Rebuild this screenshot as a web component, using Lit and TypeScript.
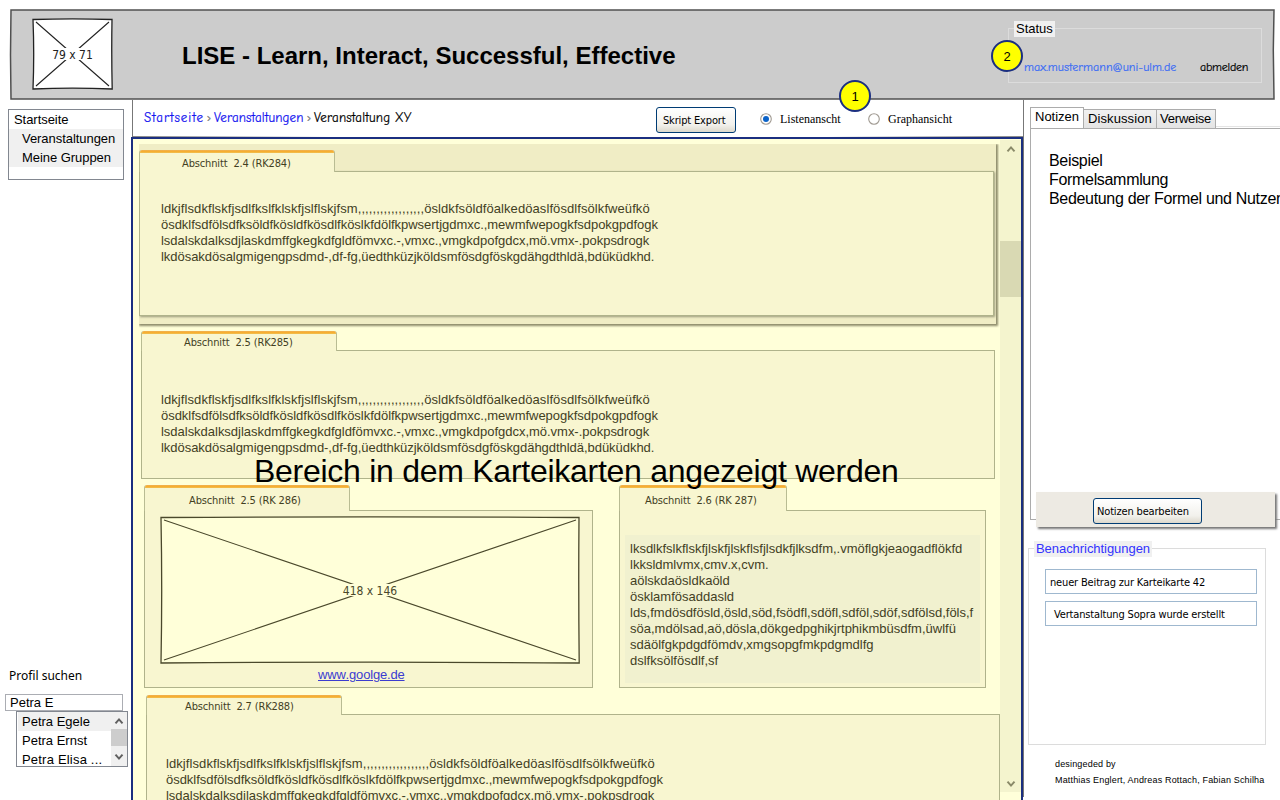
import { LitElement, html, css, svg } from "lit";
import { customElement, property } from "lit/decorators.js";

const FILLER: [string, number][] = [
  ["ldkjflsdkflskfjsdlfkslfklskfjslflskjfsm,,,,,,,,,,,,,,,,,,ösldkfsöldföalkedöaslfösdlfsölkfweüfkö", 0.08],
  ["ösdklfsdfölsdfksöldfkösldfkösdlfköslkfdölfkpwsertjgdmxc.,mewmfwepogkfsdpokgpdfogk", -0.03],
  ["lsdalskdalksdjlaskdmffgkegkdfgldfömvxc.-,vmxc.,vmgkdpofgdcx,mö.vmx-.pokpsdrogk", -0.02],
  ["lkdösakdösalgmigengpsdmd-,df-fg,üedthküzjköldsmfösdgföskgdähgdthldä,bdüküdkhd.", -0.04],
];

const NOTE_TEXT = [
  "lksdlkfslkflskfjlskfjlskflsfjlsdkfjlksdfm,.vmöflgkjeaogadflökfd",
  "lkksldmlvmx,cmv.x,cvm.",
  "aölskdaösldkaöld",
  "ösklamfösaddasld",
  "lds,fmdösdfösld,ösld,söd,fsödfl,sdöfl,sdföl,sdöf,sdfölsd,föls,f",
  "söa,mdölsad,aö,dösla,dökgedpghikjrtphikmbüsdfm,üwlfü",
  "sdäölfgkpdgdfömdv,xmgsopgfmkpdgmdlfg",
  "dslfksölfösdlf,sf",
];

const filler = () =>
  FILLER.map(([line, gap]) => html`<div style="letter-spacing:${gap}px">${line}</div>`);

const chevron = (up: boolean) => html`<svg width="10" height="8" viewBox="0 0 10 8">
  ${svg`<path d=${up ? "M1.5 6.3 L5 2.4 L8.5 6.3" : "M1.5 1.7 L5 5.6 L8.5 1.7"} fill="none" stroke="currentColor" stroke-width="2"/>`}
</svg>`;

@customElement("image-placeholder")
export class ImagePlaceholder extends LitElement {
  static styles = css`
    :host { display: block; }
    svg { display: block; font: 12px "DejaVu Sans Condensed", "DejaVu Sans", sans-serif; font-stretch: condensed; }
  `;
  @property({ type: Number }) width = 100;
  @property({ type: Number }) height = 100;
  @property() label = "";
  @property() fill = "#fff";
  @property() stroke = "#333";
  @property({ type: Number }) gap = 42;

  render() {
    const { width: w, height: h, gap: g } = this;
    return html`<svg width=${w} height=${h} viewBox="0 0 ${w} ${h}">
      <path d="M1 1.5 Q${w / 2} 0.2 ${w - 1} 1.5 Q${w - 1.6} ${h / 2} ${w - 0.8} ${h - 1} Q${w / 2} ${h - 2.6} 1 ${h - 1} Q2.4 ${h / 2} 1 1.5 Z"
        fill=${this.fill} stroke=${this.stroke} stroke-width="1.3"/>
      <path d="M4 4 L${w - 4} ${h - 4} M${w - 4} 4 L4 ${h - 4}" stroke=${this.stroke} stroke-width="1.1"/>
      <rect x=${(w - g) / 2} y=${h / 2 - 6} width=${g} height="12" fill=${this.fill}/>
      <text x=${w / 2} y=${h / 2 + 5} text-anchor="middle" fill=${this.stroke}>${this.label}</text>
    </svg>`;
  }
}

@customElement("index-card")
export class IndexCard extends LitElement {
  static styles = css`
    :host { display: flex; flex-direction: column; box-sizing: border-box; color: #42401f; }
    .tab {
      box-sizing: border-box; width: var(--tab-w); height: var(--tab-h); margin-bottom: -1px;
      background: #f8f6d0; border: 1px solid #b9bc93; border-width: 0 1px; border-radius: 3px 3px 0 0;
      position: relative; overflow: hidden; flex: none;
      padding: var(--tab-pad);
      font: 11px/14px "DejaVu Sans Condensed", "DejaVu Sans", sans-serif; font-stretch: condensed;
      letter-spacing: -0.14px; white-space: pre;
    }
    .tab::before { content: ""; position: absolute; inset: 0 -1px auto; height: 3px; background: linear-gradient(#eeb055, #f8ae2a 60%, #eec25c); }
    .body {
      box-sizing: border-box; flex: 1; background: #f8f6d0; border: 1px solid #b0b38b; padding: var(--body-pad);
      font: 13px/16px "Liberation Sans", Arial, sans-serif; white-space: nowrap; font-kerning: none;
    }
    :host([raised]) .body { box-shadow: 1px 1px 2px #9c9c7c; }
  `;
  @property() label = "";
  render() {
    return html`<div class="tab">${this.label}</div><div class="body"><slot></slot></div>`;
  }
}

@customElement("app-root")
export class AppRoot extends LitElement {
  static styles = css`
    :host { display: block; }
    * { box-sizing: border-box; }
    .page {
      width: 1280px; height: 800px; overflow: hidden; background: #fff; color: #000; position: relative;
      display: flex; flex-direction: column; font: 13px/19px "Liberation Sans", Arial, sans-serif; white-space: nowrap;
    }
    .ui { font-family: "DejaVu Sans Condensed", "DejaVu Sans", sans-serif; font-stretch: condensed; font-size: 11px; letter-spacing: -0.16px; }
    .hand { font-family: "Comic Sans MS", "Comic Neue", "Noto Sans", sans-serif; font-size: 13px; -webkit-text-stroke: .2px; }
    .legend { background: #f0f0f0; width: max-content; line-height: 16px; height: 16px; padding: 0 2px; }

    header { height: 100px; flex: none; display: flex; align-items: flex-start; position: relative; padding-left: 32px; }
    .plate { position: absolute; left: 0; top: 0; }
    header > * { position: relative; }
    header > .plate { position: absolute; }
    header image-placeholder { margin-top: 18px; }
    h1 { font-size: 24px; line-height: 28px; margin: 42px 0 0 69px; width: 826px; }
    .status { width: 254px; height: 55px; margin-top: 28px; border: 1px solid #dcdcdc; }
    .status .legend { margin: -8px 0 0 5px; }
    .account { display: flex; padding: 21px 0 0 15px; line-height: 18px; }
    .account .hand { font-size: 12px; }
    .mail { color: #3b6cf4; letter-spacing: .05px; width: 176px; }
    .logout { letter-spacing: -0.25px; }

    main { flex: 1; display: flex; min-height: 0; }
    .side { width: 131px; flex: none; display: flex; flex-direction: column; padding-top: 9px; }
    .tree { margin-left: 8px; width: 116px; height: 71px; border: 1px solid #828790; letter-spacing: -.05px; }
    .tree div { padding-left: 5px; }
    .tree .sub { background: #f0f0f0; padding-left: 13px; }
    .search-label { font: 12px/16px "Noto Sans", sans-serif; margin: 488px 0 10px 9px; }
    .search { margin-left: 5px; width: 118px; height: 17px; border: 1px solid #abadb3; padding-left: 4px; line-height: 15px; }
    .results { margin-left: 16px; width: 112px; height: 56px; border: 1px solid #828790; display: flex; overflow: hidden; }
    .names { flex: 1; padding-left: 1px; }
    .names div { padding-left: 4px; height: 19px; }
    .names div:last-child { letter-spacing: .2px; }
    .names .on { background: #f0f0f0; }
    .mini { width: 16px; background: #f0f0f0; display: flex; flex-direction: column; align-items: center; color: #606060; justify-content: space-between; padding: 5px 0; position: relative; }
    .mini::before { content: ""; position: absolute; top: 17px; width: 100%; height: 17px; background: #cdcdcd; }
    .mini svg { display: block; }

    .center { width: 892px; flex: none; display: flex; flex-direction: column; }
    .tools { height: 37px; flex: none; margin-left: 1px; border: 1px solid #777; border-width: 0 0 0 1.5px; padding: 7px 0 0 11px; display: flex; align-items: flex-start; background: linear-gradient(90deg, #888, #fff 22%, #fff 78%, #888) bottom / 100% 1px no-repeat; }
    .crumbs { display: flex; width: 512px; line-height: 22px; }
    .crumbs i { font-style: normal; color: #777; width: 10px; text-align: center; }
    .crumbs a { color: #1414f0; }
    .start { width: 60px; letter-spacing: .9px; }
    .lectures { width: 90px; letter-spacing: .1px; }
    .lecture { letter-spacing: .15px; }
    .btn { border: 1.5px solid #003c74; border-radius: 3px; background: linear-gradient(#fff, #f2f1ec 70%, #dcd8cc); height: 26px; line-height: 25px; }
    .export { width: 80px; padding-left: 6px; }
    .radio { display: flex; align-items: center; gap: 8px; font: 12px/16px "Liberation Serif", "Times New Roman", serif; margin-top: 4px; }
    .radio svg { display: block; }
    .r1 { margin-left: 24px; width: 108px; }
    .deck { flex: 1; height: 663px; border: 2px solid #1b2f80; border-bottom: 0; background: #ffffd9; display: flex; width: 892px; }
    .cards { width: 867px; height: 661px; overflow: hidden; padding: 5px 0 0 6px; }
    .group { width: 857px; height: 180px; background: #f0edc5; padding: 6px 0 0; box-shadow: 1px 1px 2px 1px #8f8d6c; clip-path: inset(0 -5px -5px 0); }
    .c1 { width: 855px; height: 166px; --tab-w: 196px; --tab-h: 22px; --tab-pad: 7px 0 0 42px; --body-pad: 29px 0 0 21px; }
    .c2 { margin: 7px 0 0 2px; width: 854px; height: 148px; --tab-w: 196px; --tab-h: 20px; --tab-pad: 5px 0 0 42px; --body-pad: 41px 0 0 19px; }
    .pair { display: flex; gap: 26px; margin: 6px 0 0 5px; }
    .c3 { width: 449px; height: 203px; --tab-w: 206px; --tab-h: 26px; --tab-pad: 9px 0 0 44px; --body-pad: 5px 0 0 15px; }
    .c4 { width: 367px; height: 203px; --tab-w: 168px; --tab-h: 26px; --tab-pad: 9px 0 0 25px; --body-pad: 24px 0 0 5px; }
    .c5 { margin: 7px 0 0 7px; width: 854px; height: 150px; --tab-w: 196px; --tab-h: 20px; --tab-pad: 5px 0 0 38px; --body-pad: 41px 0 0 19px; }
    .link { color: #3c3cd0; text-decoration: underline; margin: 3px 0 0 158px; letter-spacing: -.18px; }
    .inner { width: 355px; height: 148px; background: #f1f1cf; padding: 6px 0 0 5px; }
    .bar { width: 21px; flex: none; background: #f4f4ce; height: 652px; margin-top: 1px; color: #8a8a69; display: flex; flex-direction: column; align-items: center; padding: 5px 0 4px; }
    .thumb { width: 21px; height: 56px; background: #d9d9b3; margin: 88px 0 auto; }
    .edge { width: 1px; background: #777; height: 697px; flex: none; }

    .right { flex: 1; min-width: 0; padding: 7px 0 0 6px; overflow: hidden; }
    .tabs { display: flex; align-items: flex-end; height: 21px; background: linear-gradient(#e4e4e4, #e4e4e4) 0 19px / 100% 1px no-repeat; }
    .tabs div { border: 1px solid #acacac; border-bottom: 0; border-left-width: 0; height: 19px; line-height: 18px; background: linear-gradient(#f1f1f1, #e4e4e4); padding-left: 4px; }
    .tabs .sel { width: 54px; height: 21px; border-left-width: 1px; background: #fff; }
    .t2 { width: 73px; letter-spacing: .1px; }
    .tabs .t3 { width: 59px; letter-spacing: -.2px; padding-left: 3px; }
    .notes { margin-right: -20px; height: 392px; border: 1px solid #acacac; padding: 22px 0 0 18px; font-size: 16px; line-height: 19px; letter-spacing: -.32px; }
    .actions { width: 239px; height: 35px; margin: -28px 0 0 6px; position: relative; background: #edeae3; box-shadow: 2px 2px 2px #777; padding: 6px 0 0 57px; }
    .edit { width: 109px; padding-left: 3px; }
    .news { width: 238px; height: 197px; margin: 21px 0 0 -2px; border: 1px solid #dcdcdc; }
    .news .legend { color: #3333ff; margin: -8px 0 0 5px; letter-spacing: -.05px; }
    .item { width: 212px; height: 25px; border: 1.5px solid #9fb8cf; margin: 12px 0 0 16px; padding-left: 4px; line-height: 25px; }
    .item + .item { margin-top: 7px; padding-left: 8px; }
    .credits { margin: 11px 0 0 25px; font-size: 9px; line-height: 16px; letter-spacing: .17px; }

    .caption { position: absolute; left: 254px; top: 453px; font-size: 32px; line-height: 36px; letter-spacing: -.27px; }
    .badge { position: absolute; width: 32px; height: 32px; border: 2px solid #1b2f80; border-radius: 50%; background: #ff0; text-align: center; line-height: 29px; font-size: 13px; }
    .b1 { left: 839px; top: 80px; }
    .b2 { left: 991px; top: 40px; }
  `;

  private radio(on: boolean) {
    return html`<svg width="12" height="12" viewBox="0 0 12 12">
      <circle cx="6" cy="6" r="5.3" fill="#fff" stroke="#a09a92" stroke-width="1.1"/>
      ${on ? svg`<circle cx="6" cy="6" r="3" fill="#0a62c8"/>` : null}
    </svg>`;
  }

  render() {
    return html`<div class="page">
      <header>
        <svg class="plate" width="1280" height="100" viewBox="0 0 1280 100">
          <path d="M11 10 H1274 L1273.3 50 L1274 99 L11 99 L10.5 55 Z" fill="#ccc" stroke="#505050" stroke-width="1.5"/>
        </svg>
        <image-placeholder .width=${81} .height=${72} .gap=${42} label="79 x 71" stroke="#222"></image-placeholder>
        <h1>LISE - Learn, Interact, Successful, Effective</h1>
        <section class="status">
          <div class="legend">Status</div>
          <div class="account"><span class="hand mail">max.mustermann@uni-ulm.de</span><span class="hand logout">abmelden</span></div>
        </section>
      </header>
      <main>
        <aside class="side">
          <nav class="tree"><div>Startseite</div><div class="sub">Veranstaltungen</div><div class="sub">Meine Gruppen</div></nav>
          <div class="search-label">Profil suchen</div>
          <div class="search">Petra E</div>
          <div class="results">
            <div class="names"><div class="on">Petra Egele</div><div>Petra Ernst</div><div>Petra Elisa ...</div></div>
            <div class="mini">${chevron(true)}${chevron(false)}</div>
          </div>
        </aside>
        <section class="center">
          <div class="tools">
            <nav class="crumbs hand"><a class="start">Startseite</a><i>›</i><a class="lectures">Veranstaltungen</a><i>›</i><span class="lecture">Veranstaltung XY</span></nav>
            <div class="btn export ui">Skript Export</div>
            <div class="radio r1">${this.radio(true)}<span>Listenanscht</span></div>
            <div class="radio">${this.radio(false)}<span>Graphansicht</span></div>
          </div>
          <div class="deck">
            <div class="cards">
              <div class="group"><index-card class="c1" raised label="Abschnitt  2.4 (RK284)">${filler()}</index-card></div>
              <index-card class="c2" label="Abschnitt  2.5 (RK285)">${filler()}</index-card>
              <div class="pair">
                <index-card class="c3" label="Abschnitt  2.5 (RK 286)">
                  <image-placeholder .width=${420} .height=${148} .gap=${50} label="418 x 146" fill="#ffffd9" stroke="#4a482b"></image-placeholder>
                  <div class="link">www.goolge.de</div>
                </index-card>
                <index-card class="c4" label="Abschnitt  2.6 (RK 287)">
                  <div class="inner">${NOTE_TEXT.map((l) => html`<div>${l}</div>`)}</div>
                </index-card>
              </div>
              <index-card class="c5" label="Abschnitt  2.7 (RK288)">${filler()}</index-card>
            </div>
            <div class="bar">${chevron(true)}<div class="thumb"></div>${chevron(false)}</div>
          </div>
        </section>
        <div class="edge"></div>
        <aside class="right">
          <div class="tabs"><div class="sel">Notizen</div><div class="t2">Diskussion</div><div class="t3">Verweise</div></div>
          <div class="notes"><div>Beispiel</div><div>Formelsammlung</div><div>Bedeutung der Formel und Nutzen</div></div>
          <div class="actions"><div class="btn edit ui">Notizen bearbeiten</div></div>
          <section class="news">
            <div class="legend">Benachrichtigungen</div>
            <div class="item ui">neuer Beitrag zur Karteikarte 42</div>
            <div class="item ui">Vertanstaltung Sopra wurde erstellt</div>
          </section>
          <footer class="credits"><div>desingeded by</div><div>Matthias Englert, Andreas Rottach, Fabian Schilha</div></footer>
        </aside>
      </main>
      <div class="caption">Bereich in dem Karteikarten angezeigt werden</div>
      <div class="badge b1">1</div>
      <div class="badge b2">2</div>
    </div>`;
  }
}
